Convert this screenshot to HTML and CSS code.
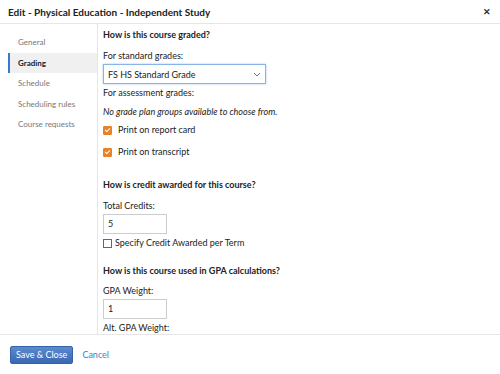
FILE: index.html
```html
<!DOCTYPE html>
<html lang="en">
<head>
    <meta charset="UTF-8">
    <meta name="viewport" content="width=device-width, initial-scale=1.0">
    <title>Edit Course</title>
    <link rel="stylesheet" href="styles.css">
</head>
<body>
    <div class="modal">
        <div class="modal-header">
            <h1>Edit - Physical Education - Independent Study</h1>
            <span class="close">&#x2715;</span>
        </div>
        <div class="modal-body">
            <ul class="side-nav">
                <li>General</li>
                <li class="active">Grading</li>
                <li>Schedule</li>
                <li>Scheduling rules</li>
                <li>Course requests</li>
            </ul>
            <div class="content">
                <h2>How is this course graded?</h2>
                <label class="field-label">For standard grades:</label>
                <div class="select">
                    <span>FS HS Standard Grade</span>
                    <svg width="8" height="5" viewBox="0 0 8 5"><path d="M1 1 L4 4 L7 1" fill="none" stroke="#666" stroke-width="0.9"/></svg>
                </div>
                <label class="field-label after-select">For assessment grades:</label>
                <p class="note">No grade plan groups available to choose from.</p>
                <label class="check"><span class="box checked"></span>Print on report card</label>
                <label class="check second"><span class="box checked"></span>Print on transcript</label>

                <h2 class="section">How is credit awarded for this course?</h2>
                <label class="field-label">Total Credits:</label>
                <div class="input">5</div>
                <label class="check plain"><span class="box"></span>Specify Credit Awarded per Term</label>

                <h2 class="section gpa">How is this course used in GPA calculations?</h2>
                <label class="field-label">GPA Weight:</label>
                <div class="input">1</div>
                <label class="field-label">Alt. GPA Weight:</label>
            </div>
        </div>
        <div class="modal-footer">
            <button class="btn-primary">Save &amp; Close</button>
            <a class="link">Cancel</a>
        </div>
    </div>
</body>
</html>
```
FILE: styles.css
```css
body {
    margin: 0;
    font-family: Lato, 'Open Sans', sans-serif;
    font-size: 9px;
    color: #222;
    background: #fff;
}
.modal {
    width: 500px;
    height: 374px;
    display: flex;
    flex-direction: column;
    overflow: hidden;
}
.modal-header {
    height: 23px;
    border-bottom: 1px solid #e6e6e6;
    display: flex;
    align-items: center;
    justify-content: space-between;
    padding: 0 9px 0 8px;
    flex-shrink: 0;
}
.modal-header h1 {
    margin: 0;
    font-size: 10px;
    font-weight: bold;
    color: #222;
}
.close {
    font-size: 9px;
    font-weight: bold;
    color: #333;
}
.modal-body {
    flex: 1;
    display: flex;
    overflow: hidden;
}
.side-nav {
    list-style: none;
    margin: 0;
    padding: 8px 0 0 8px;
    width: 89px;
    border-right: 1px solid #e6e6e6;
    flex-shrink: 0;
}
.side-nav li {
    height: 20.5px;
    line-height: 20.5px;
    padding-left: 8px;
    font-size: 8px;
    color: #777;
    border-left: 2px solid transparent;
}
.side-nav li.active {
    background: #f0f0f0;
    border-left-color: #3a78c8;
    color: #222;
    font-weight: bold;
}
.content {
    padding: 5px 0 0 5px;
    flex: 1;
}
.content h2 {
    margin: 0 0 9px;
    font-size: 9px;
    font-weight: bold;
    line-height: 12px;
}
.content h2.section {
    margin-top: 21px;
}
.content h2.gpa {
    margin-top: 16px;
    margin-bottom: 8px;
}
.field-label {
    display: block;
    line-height: 12px;
    margin-bottom: 2px;
}
.field-label.after-select {
    margin-top: 3px;
}
.select {
    height: 20px;
    border: 1px solid #8ab4e8;
    box-shadow: 0 0 2px #a8c8f0;
    display: flex;
    align-items: center;
    justify-content: space-between;
    padding: 0 4px;
    box-sizing: border-box;
    width: 163px;
}
.note {
    margin: 7px 0 6px;
    font-style: italic;
    line-height: 12px;
}
.check {
    display: flex;
    align-items: center;
    line-height: 12px;
}
.check.second {
    margin-top: 10px;
}
.box {
    width: 7px;
    height: 7px;
    border: 1px solid #999;
    border-radius: 1px;
    margin-right: 6px;
    position: relative;
    background: #fff;
}
.box.checked {
    background: #e8822a;
    border-color: #e8822a;
}
.box.checked::after {
    content: "";
    position: absolute;
    left: 2px;
    top: 0;
    width: 2px;
    height: 4px;
    border: solid #fff;
    border-width: 0 1px 1px 0;
    transform: rotate(45deg);
}
.check.plain {
    margin-top: 3px;
}
.check.plain .box {
    margin-right: 3px;
    border-color: #666;
    border-radius: 0;
}
.input {
    width: 64px;
    height: 20px;
    border: 1px solid #ccc;
    box-sizing: border-box;
    padding: 0 4px;
    line-height: 18px;
    margin-bottom: 3px;
}
.modal-footer {
    height: 39px;
    border-top: 1px solid #e6e6e6;
    display: flex;
    align-items: center;
    padding: 0 10px;
    flex-shrink: 0;
}
.btn-primary {
    font-family: inherit;
    font-size: 9px;
    color: #fff;
    background: linear-gradient(#5a8ad0, #3a68b4);
    border: 1px solid #3562a8;
    border-radius: 2px;
    height: 18px;
    padding: 0 5px;
    margin-right: 9px;
}
.link {
    color: #3a7ed0;
    font-size: 9px;
}
```
